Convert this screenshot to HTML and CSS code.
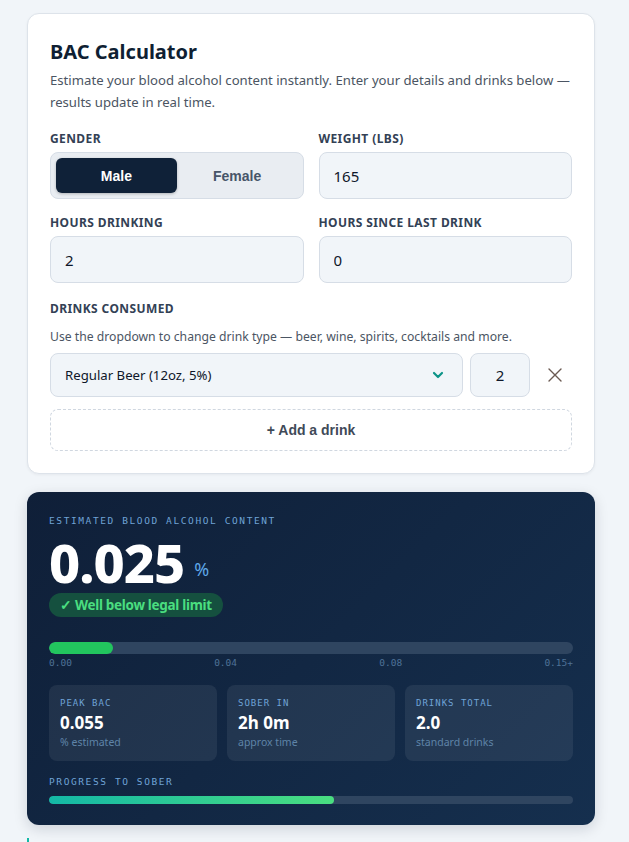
FILE: index.html
```html
<!DOCTYPE html>
<html>
	<head>
		<meta charset="utf-8">
		<meta name="viewport" content="width=device-width, initial-scale=1.0">
		<title>BAC Calculator</title>
		<link rel="stylesheet" href="styles.css">
	</head>
	<body>
		<div id="page">
			<!-- ------------------------ Inputs ------------------------ -->
			<div class="card">
				<h1 class="title">BAC Calculator</h1>
				<p class="intro">Estimate your blood alcohol content instantly. Enter your details and drinks below — results update in real time.</p>

				<div class="grid">
					<div class="field">
						<label class="label">Gender</label>
						<div class="toggle">
							<button class="toggle-btn active">Male</button>
							<button class="toggle-btn">Female</button>
						</div>
					</div>
					<div class="field">
						<label class="label">Weight (lbs)</label>
						<input class="input" type="text" value="165">
					</div>
					<div class="field">
						<label class="label">Hours drinking</label>
						<input class="input" type="text" value="2">
					</div>
					<div class="field">
						<label class="label">Hours since last drink</label>
						<input class="input" type="text" value="0">
					</div>
				</div>

				<div class="drinks">
					<label class="label">Drinks consumed</label>
					<p class="hint">Use the dropdown to change drink type — beer, wine, spirits, cocktails and more.</p>
					<div class="drink-row">
						<div class="select">
							<span>Regular Beer (12oz, 5%)</span>
							<svg width="14" height="14" viewBox="0 0 14 14"><path d="M3 5l4 4 4-4" fill="none" stroke="#0d9488" stroke-width="2.2" stroke-linecap="round" stroke-linejoin="round"/></svg>
						</div>
						<input class="qty" type="text" value="2">
						<button class="remove">
							<svg width="16" height="16" viewBox="0 0 16 16"><path d="M2 2l12 12M14 2L2 14" stroke="#6b5a52" stroke-width="1.4" stroke-linecap="round"/></svg>
						</button>
					</div>
					<button class="add">+ Add a drink</button>
				</div>
			</div>

			<!-- ------------------------ Result ------------------------ -->
			<div class="result">
				<div class="mono-label">Estimated blood alcohol content</div>
				<div class="bac">
					<span class="bac-value">0.025</span>
					<span class="bac-unit">%</span>
				</div>
				<div class="badge">✓ Well below legal limit</div>

				<div class="meter">
					<div class="meter-fill" style="width: 12.2%"></div>
				</div>
				<div class="scale">
					<span>0.00</span><span>0.04</span><span>0.08</span><span>0.15+</span>
				</div>

				<div class="stats">
					<div class="stat">
						<div class="stat-label">Peak BAC</div>
						<div class="stat-value">0.055</div>
						<div class="stat-sub">% estimated</div>
					</div>
					<div class="stat">
						<div class="stat-label">Sober in</div>
						<div class="stat-value">2h 0m</div>
						<div class="stat-sub">approx time</div>
					</div>
					<div class="stat">
						<div class="stat-label">Drinks total</div>
						<div class="stat-value">2.0</div>
						<div class="stat-sub">standard drinks</div>
					</div>
				</div>

				<div class="mono-label">Progress to sober</div>
				<div class="progress">
					<div class="progress-fill" style="width: 54.4%"></div>
				</div>
			</div>

			<div class="next"></div>
		</div>
	</body>
</html>
```

FILE: styles.css
```css
html {
	height: 100%;
	margin: 0;
	padding: 0;
}
body {
	margin: 0;
	padding: 0;
	background-color: #f1f5f9;
	font-family: "Noto Sans", "Open Sans", sans-serif;
	color: #0f172a;
	overflow: hidden;
}
#page {
	padding: 13px 34px 0 27px;
}

/* input card */
.card {
	background: #fff;
	border: 1px solid #dde3ea;
	border-radius: 12px;
	padding: 22px 22px 22px 22px;
	box-shadow: 0 1px 3px rgba(15, 23, 42, 0.05);
}
.title {
	margin: 0;
	font-size: 20px;
	font-weight: 700;
	color: #0f1f33;
	line-height: 32px;
}
.intro {
	margin: 1px 0 0;
	font-size: 13.15px;
	line-height: 22px;
	color: #4b5563;
}
.grid {
	display: grid;
	grid-template-columns: 1fr 1fr;
	column-gap: 15px;
	row-gap: 15px;
	margin-top: 17px;
}
.field {
	display: flex;
	flex-direction: column;
}
.label {
	display: block;
	font-size: 12px;
	font-weight: 700;
	letter-spacing: 0.4px;
	text-transform: uppercase;
	color: #334155;
	line-height: 18px;
	margin-bottom: 4px;
}
.toggle {
	display: flex;
	height: 47px;
	box-sizing: border-box;
	padding: 5px;
	background: #e9edf2;
	border: 1px solid #d6dde6;
	border-radius: 8px;
}
.toggle-btn {
	flex: 1;
	border: none;
	background: transparent;
	border-radius: 6px;
	font-family: "Liberation Sans", Arial, sans-serif;
	font-size: 14px;
	font-weight: 700;
	color: #475569;
}
.toggle-btn.active {
	background: #0f2138;
	color: #fff;
	box-shadow: 0 1px 3px rgba(0, 0, 0, 0.25);
}
.input {
	height: 47px;
	box-sizing: border-box;
	padding: 0 14px;
	background: #f1f5f9;
	border: 1px solid #d6dde6;
	border-radius: 8px;
	font-family: "Noto Sans", sans-serif;
	font-size: 15px;
	color: #0f172a;
	outline: none;
	width: 100%;
}

/* drinks */
.drinks {
	margin-top: 17px;
}
.hint {
	margin: 9px 0 0;
	font-size: 12.2px;
	line-height: 20px;
	color: #4b5563;
}
.drink-row {
	display: flex;
	align-items: center;
	gap: 7px;
	margin-top: 6px;
}
.select {
	flex: 1;
	height: 44px;
	box-sizing: border-box;
	display: flex;
	align-items: center;
	justify-content: space-between;
	padding: 0 17px 0 14px;
	background: #f1f5f9;
	border: 1px solid #d6dde6;
	border-radius: 8px;
	font-size: 13.2px;
	color: #0f172a;
}
.qty {
	width: 60px;
	height: 44px;
	box-sizing: border-box;
	text-align: center;
	background: #f1f5f9;
	border: 1px solid #d6dde6;
	border-radius: 8px;
	font-family: "Noto Sans", sans-serif;
	font-size: 15px;
	color: #0f172a;
	outline: none;
}
.remove {
	width: 35px;
	height: 44px;
	border: none;
	background: transparent;
	display: flex;
	align-items: center;
	justify-content: center;
	padding: 0;
}
.add {
	display: block;
	width: 100%;
	height: 42px;
	margin-top: 12px;
	background: #fff;
	border: 1px dashed #d0d7e0;
	border-radius: 8px;
	font-family: "Liberation Sans", Arial, sans-serif;
	font-size: 14px;
	font-weight: 700;
	color: #3f4a58;
}

/* result panel */
.result {
	margin-top: 18px;
	padding: 22px 22px 21px 22px;
	border-radius: 12px;
	background: linear-gradient(135deg, #0f1f38 0%, #152f4e 100%);
	box-shadow: 0 4px 14px rgba(15, 23, 42, 0.15);
	color: #fff;
}
.mono-label {
	font-family: "DejaVu Sans Mono", monospace;
	font-size: 9.5px;
	letter-spacing: 1.6px;
	text-transform: uppercase;
	color: #6fa3d6;
	line-height: 14px;
}
.bac {
	display: flex;
	align-items: flex-end;
	gap: 10px;
	margin-top: 8px;
	height: 52px;
}
.bac-value {
	font-size: 54px;
	font-weight: 800;
	letter-spacing: -1px;
	line-height: 52px;
}
.bac-unit {
	font-size: 18px;
	line-height: 22px;
	margin-bottom: 8px;
	color: #5fa8e8;
}
.badge {
	display: inline-block;
	margin-top: 5px;
	padding: 2px 11px;
	border-radius: 12px;
	background: #15503f;
	color: #4ade80;
	font-size: 13.5px;
	font-weight: 700;
	letter-spacing: -0.3px;
	line-height: 20px;
}
.meter {
	margin-top: 25px;
	height: 12px;
	border-radius: 6px;
	background: #2f4560;
	overflow: hidden;
}
.meter-fill {
	height: 100%;
	border-radius: 6px;
	background: #22c55e;
}
.scale {
	display: flex;
	justify-content: space-between;
	margin-top: 3px;
	font-family: "DejaVu Sans Mono", monospace;
	font-size: 9.5px;
	color: #4f7297;
	line-height: 12px;
}
.stats {
	display: grid;
	grid-template-columns: 1fr 1fr 1fr;
	gap: 10px;
	margin-top: 16px;
	margin-bottom: 14px;
}
.stat {
	background: rgba(255, 255, 255, 0.07);
	border-radius: 8px;
	padding: 12px 11px 10px 11px;
}
.stat-label {
	font-family: "DejaVu Sans Mono", monospace;
	font-size: 9px;
	letter-spacing: 1px;
	text-transform: uppercase;
	color: #6fa3d6;
	line-height: 12px;
}
.stat-value {
	margin-top: 3px;
	font-size: 17px;
	font-weight: 700;
	line-height: 22px;
}
.stat-sub {
	font-size: 10.5px;
	color: #5f84a8;
	line-height: 17px;
}
.progress {
	margin-top: 7px;
	height: 8px;
	border-radius: 4px;
	background: #2f4560;
	overflow: hidden;
}
.progress-fill {
	height: 100%;
	border-radius: 4px;
	background: linear-gradient(90deg, #14b8a6, #4ade80);
}
.next {
	margin-top: 13px;
	height: 20px;
	border-left: 2px solid #14b8a6;
}
```
